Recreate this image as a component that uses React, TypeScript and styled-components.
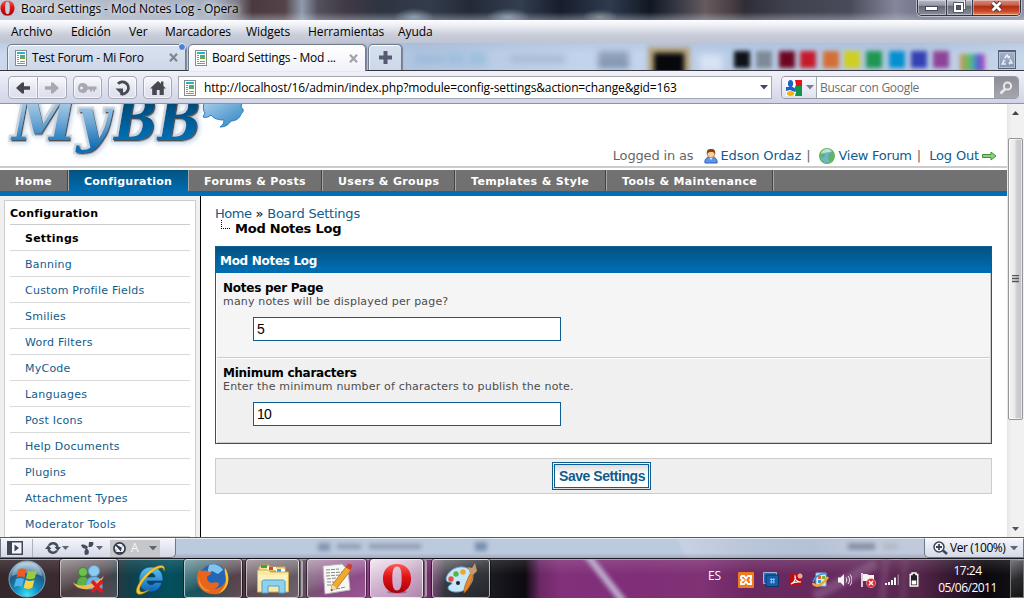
import React from "react";
import styled, { createGlobalStyle, css } from "styled-components";

const ui = `"Open Sans", "Noto Sans", sans-serif`;
const verdana = `"DejaVu Sans", sans-serif`;

const Global = createGlobalStyle`
  * { box-sizing: border-box; }
  body { margin: 0; background: #fff; overflow: hidden; }
  svg { display: block; flex: none; }
`;

const Screen = styled.div`
  width: 1024px;
  height: 598px;
  display: flex;
  flex-direction: column;
  overflow: hidden;
  font: 12px/16px ${ui};
  color: #000;
`;

const Text = styled.span<{ $ls?: number; $ml?: number; $w?: number }>`
  white-space: nowrap;
  flex: none;
  letter-spacing: ${(p) => p.$ls ?? 0}px;
  margin-left: ${(p) => p.$ml ?? 0}px;
  ${(p) => p.$w && css`width: ${p.$w}px;`}
`;

/* ---------- window frame ---------- */

const TitleBar = styled.div`
  height: 20px;
  flex: none;
  display: flex;
  align-items: flex-start;
  background:
    linear-gradient(180deg, rgba(255,255,255,0) 60%, rgba(200,210,225,.4) 100%),
    radial-gradient(ellipse 20px 9px at 414px 17px, #a3b7c9aa, transparent),
    radial-gradient(ellipse 22px 9px at 508px 17px, #a3b7c9aa, transparent),
    radial-gradient(ellipse 18px 8px at 600px 17px, #93a79f99, transparent),
    linear-gradient(90deg, #c6d0dd 0, #b6becb 80px, #aab4c4 160px, #a5afc0 215px, #7b7882 238px, #4a3a3f 252px, #54444a 285px, #8f9cad 302px, #54505c 318px, #403a44 345px, #2e3541 380px, #343c4c 430px, #232a37 470px, #343e50 520px, #161d2c 560px, #303b4f 610px, #111722 650px, #3a3c48 680px, #665a5f 705px, #4a4044 730px, #2f2e37 745px, #41424f 790px, #4a4b5a 850px, #85869a 895px, #70728a 925px, #8c8fa6 1024px);
`;

const TitleText = styled(Text)`
  line-height: 17px;
  margin-left: 6px;
  text-shadow: 0 0 5px #fff, 0 0 8px #ffffffaa;
`;

const WinButtons = styled.div`
  margin-left: auto;
  margin-right: 3px;
  width: 104px;
  height: 16px;
  display: flex;
  border: 1px solid #2f3342;
  border-top: 0;
  border-radius: 0 0 5px 5px;
  overflow: hidden;
  box-shadow: 0 0 0 1px #ffffff77;
`;

const WinButton = styled.div<{ $w: number; $close?: boolean }>`
  width: ${(p) => p.$w}px;
  height: 15px;
  display: flex;
  justify-content: center;
  border-right: 1px solid #3a3d4c;
  box-shadow: inset 0 0 0 1px #ffffff66;
  background: ${(p) =>
    p.$close
      ? "linear-gradient(#d58b7c 0, #c7604c 35%, #b02c13 40%, #c94a26 75%, #e58a5e 100%)"
      : "linear-gradient(#b5b8c4 0, #9799a7 35%, #666877 42%, #8a8d9c 100%)"};
  &:last-child { border-right: 0; }
`;

const MenuBar = styled.div`
  height: 23px;
  flex: none;
  display: flex;
  align-items: center;
  padding-top: 1px;
  background: linear-gradient(#fdfdfe 0, #eceef4 25%, #c9cdda 65%, #bfc4d3 100%);
`;

const TabStrip = styled.div`
  height: 28px;
  flex: none;
  display: flex;
  align-items: flex-end;
  position: relative;
  border-bottom: 1px solid #37383f;
  background:
    linear-gradient(180deg, rgba(150,170,200,.25), transparent 40%),
    linear-gradient(90deg, #c9d8ec 0, #c0cfe4 300px, #b0c4e0 420px, #bdcfe8 520px, #c5d5ee 620px, #bacde8 720px, #b4c8e2 900px, #c7d7ea 1024px);
`;

const Glass = styled.div`
  position: absolute;
  inset: 0;
  overflow: hidden;
`;

const Smudge = styled.i<{ $x: number; $y: number; $w: number; $h: number; $c: string; $b?: number; $edge?: string }>`
  position: absolute;
  left: ${(p) => p.$x}px;
  top: ${(p) => p.$y}px;
  width: ${(p) => p.$w}px;
  height: ${(p) => p.$h}px;
  background: ${(p) => p.$c};
  ${(p) => p.$edge && css`border: 6px solid ${p.$edge};`}
  filter: blur(${(p) => p.$b ?? 2}px);
`;

const Tab = styled.div<{ $active?: boolean; $w: number; $ml: number }>`
  position: relative;
  width: ${(p) => p.$w}px;
  height: ${(p) => (p.$active ? 27 : 26)}px;
  margin-left: ${(p) => p.$ml}px;
  margin-bottom: ${(p) => (p.$active ? -1 : 0)}px;
  flex: none;
  display: flex;
  align-items: center;
  padding: 0 7px 0 ${(p) => (p.$active ? 6 : 7)}px;
  border: 1px solid #747d8e;
  border-bottom: 0;
  border-radius: 5px 5px 0 0;
  box-shadow: inset 0 1px 0 #fff, inset 1px 0 0 #ffffff99, 1px 0 1px #52596a99;
  background: ${(p) =>
    p.$active ? "linear-gradient(#ffffff, #f1f2f9)" : "linear-gradient(#dfe7f2cc, #ccd7e8)"};
`;

const TabDot = styled.i`
  position: absolute;
  right: -1px;
  top: -2px;
  width: 8px;
  height: 8px;
  border: 1px solid #eef3ff;
  border-radius: 50%;
  background: #4b7fd6;
`;

const Spacer = styled.span`
  flex: 1;
`;

const Trash = styled.div`
  position: relative;
  margin: 0 8px 1px auto;
  width: 18px;
  height: 19px;
  display: grid;
  place-items: center;
  border: 1px solid #56627a;
  border-top-width: 2px;
  background: linear-gradient(#a3b1c6, #8494ae);
  box-shadow: inset 0 0 0 1px #b5c2d6;
`;

const ToolBar = styled.div`
  height: 33px;
  flex: none;
  display: flex;
  align-items: flex-start;
  padding: 5px 5px 0 8px;
  border-bottom: 1px solid #8f93a8;
  background: linear-gradient(#f1f1f9 0, #e2e4f1 45%, #d0d4e7 100%);
`;

const ToolButton = styled.div<{ $w: number; $join?: "l" | "r" }>`
  width: ${(p) => p.$w}px;
  height: 23px;
  flex: none;
  display: grid;
  place-items: center;
  margin-right: ${(p) => (p.$join === "l" ? 0 : 6)}px;
  border: 1px solid #a5a8b5;
  ${(p) => p.$join === "r" && "border-left: 0;"}
  border-radius: ${(p) => (p.$join === "l" ? "4px 0 0 4px" : p.$join === "r" ? "0 4px 4px 0" : "4px")};
  background: linear-gradient(#fafafd, #e3e5f0 60%, #dddfeb);
  box-shadow: inset 0 0 0 1px #ffffffaa;
`;

const Address = styled.div`
  width: 594px;
  height: 23px;
  flex: none;
  display: flex;
  align-items: center;
  padding: 0 3px 0 5px;
  background: #fff;
  border: 1px solid #a4a6b2;
`;

const Search = styled.div`
  width: 238px;
  height: 23px;
  flex: none;
  display: flex;
  margin-left: 9px;
  border: 1px solid #9699a6;
  border-radius: 4px;
  overflow: hidden;
`;

const Engine = styled.div`
  width: 35px;
  display: flex;
  align-items: center;
  gap: 4px;
  padding-left: 4px;
  border-right: 1px solid #a4a6b2;
  background: linear-gradient(#fafafd, #dfe1ed);
`;

const SearchField = styled.div`
  flex: 1;
  display: flex;
  align-items: center;
  padding-left: 3px;
  background: #fff;
  color: #6d6d6d;
`;

const SearchGo = styled.div`
  width: 24px;
  display: grid;
  place-items: center;
  background: linear-gradient(#8e8f96, #a5a6ad);
`;

/* ---------- page ---------- */

const Viewport = styled.div`
  height: 433px;
  flex: none;
  display: flex;
  background: #fff;
`;

const Page = styled.div`
  width: 1007px;
  flex: none;
  display: flex;
  flex-direction: column;
  overflow: hidden;
  font: 13px/16px ${verdana};
`;

const Header = styled.div`
  height: 64px;
  flex: none;
  display: flex;
  justify-content: space-between;
  border-bottom: 2px solid #ccc;
`;

const Welcome = styled.div`
  display: flex;
  align-items: center;
  height: 20px;
  margin-top: 42px;
  margin-right: 10px;
  color: #666;
`;

const Link = styled(Text).attrs({ as: "a" })`
  color: #0f5c8e;
`;

const Nav = styled.div`
  height: 26px;
  flex: none;
  margin-top: 2px;
  display: flex;
  background: #717171;
  border-bottom: 5px solid #006eb3;
`;

const NavItem = styled.div<{ $w: number; $active?: boolean }>`
  width: ${(p) => p.$w}px;
  height: 21px;
  flex: none;
  padding-left: 15px;
  font: bold 11px/24px ${verdana};
  letter-spacing: ${(p) => (p.$active ? 0.24 : 0.35)}px;
  white-space: nowrap;
  color: #fff;
  border-right: 1px solid #a5a5a5;
  ${(p) =>
    p.$active
      ? "background: linear-gradient(#04527f, #006cb0);"
      : "box-shadow: inset -1px 0 0 #444;"}
`;

const Columns = styled.div`
  flex: 1;
  min-height: 0;
  display: flex;
`;

const SideColumn = styled.div`
  width: 201px;
  flex: none;
  padding: 4px 4px 0;
  background: #f0f0f0;
  border-right: 1px solid #000;
`;

const SideBox = styled.div`
  height: 360px;
  padding: 0 5px;
  background: #fff;
  border: 1px solid #ccc;
`;

const SideTitle = styled.div`
  height: 24px;
  font: bold 11px/26px ${verdana};
  letter-spacing: 0.25px;
  border-bottom: 1px solid #ccc;
`;

const SideItem = styled.div<{ $active?: boolean }>`
  height: 26px;
  padding-left: 15px;
  font: ${(p) => (p.$active ? "bold" : "normal")} 11px/27px ${verdana};
  letter-spacing: 0.24px;
  color: ${(p) => (p.$active ? "#000" : "#0f5c8e")};
  border-bottom: 1px solid #d9d9d9;
`;

const Content = styled.div`
  flex: 1;
  padding: 10px 15px 0 14px;
`;

const Crumbs = styled.div`
  height: 16px;
  display: flex;
`;

const Current = styled.div`
  height: 15px;
  display: flex;
  padding-left: 6px;
  font: bold 13px/14px ${verdana};
  letter-spacing: -0.24px;
`;

const Elbow = styled.i`
  width: 9px;
  height: 9px;
  margin: -2px 5px 0 0;
  border-left: 1px dotted #000;
  border-bottom: 1px dotted #000;
`;

const Panel = styled.div`
  height: 198px;
  margin-top: 9px;
  border: 1px solid #0f5c8e;
`;

const PanelTitle = styled.div`
  height: 26px;
  padding-left: 4px;
  font: bold 12px/28px ${verdana};
  letter-spacing: -0.3px;
  color: #fff;
  background: linear-gradient(#04527f, #006cb0 85%);
`;

const Setting = styled.div<{ $alt?: boolean }>`
  height: 85px;
  padding: 7px 0 0 6px;
  margin-left: 1px;
  background: ${(p) => (p.$alt ? "#f0f0f0" : "#f5f5f5")};
  border-bottom: 1px solid #ccc;
  border-right: 1px solid #ccc;
  box-shadow: inset 0 1px 0 #fff;
`;

const SettingName = styled.div`
  height: 15px;
  font: bold 12px/17px ${verdana};
  letter-spacing: -0.25px;
`;

const SettingHelp = styled.div`
  font: 11px/13px ${verdana};
  letter-spacing: 0.175px;
  color: #4c4c4c;
`;

const Field = styled.div`
  width: 308px;
  height: 24px;
  margin: 9px 0 0 30px;
  padding-left: 3px;
  font: 14px/23px "Liberation Sans", Arial, sans-serif;
  letter-spacing: -0.8px;
  background: #fff;
  border: 1px solid #0f5c8e;
`;

const Submit = styled.div`
  height: 36px;
  margin-top: 14px;
  padding-right: 4px;
  display: grid;
  place-items: center;
  background: #efefef;
  border: 1px solid #ccc;
`;

const SaveButton = styled.div`
  width: 99px;
  height: 28px;
  padding-left: 4px;
  font: bold 14px/23px "Liberation Sans", Arial, sans-serif;
  letter-spacing: -0.45px;
  white-space: nowrap;
  color: #0f5c8e;
  border: 3px double #0f5c8e;
  background: linear-gradient(#dcdcdc, #fff 45%);
`;

const ScrollBar = styled.div`
  width: 17px;
  display: flex;
  flex-direction: column;
  align-items: center;
  justify-content: space-between;
  padding: 7px 0 6px;
  background: linear-gradient(90deg, #e6e6e6, #f1f1f1 30%);
`;

const Thumb = styled.div`
  width: 15px;
  height: 282px;
  margin: 23px 0 auto;
  display: grid;
  place-items: center;
  border: 1px solid #979797;
  border-radius: 2px;
  background: linear-gradient(90deg, #f4f4f4 0, #e9e9eb 45%, #d2d2d6 55%, #c0c1c6 100%);
  box-shadow: inset 0 0 0 1px #fff9;
`;

/* ---------- bottom bars ---------- */

const StatusBar = styled.div`
  position: relative;
  height: 21px;
  flex: none;
  display: flex;
  justify-content: space-between;
  border-top: 1px solid #555a66;
  box-shadow: inset 0 1px 0 #e6ecf5;
  background:
    linear-gradient(180deg, transparent 75%, #8d8ea888 100%),
    linear-gradient(65deg, #bccadd 0, #bccadd 620px, #c6d1e2 624px, #b9c5d8 690px, #b5c1d5 740px, #c1cbdc 790px, #bdc7da 100%);
`;

const StatusGroup = styled.div<{ $w: number; $right?: boolean }>`
  position: relative;
  width: ${(p) => p.$w}px;
  height: 20px;
  display: flex;
  align-items: center;
  border: 1px solid #6f7686;
  border-top-color: #fff;
  border-radius: ${(p) => (p.$right ? "0 0 0 5px" : "0 0 5px 0")};
  background: linear-gradient(#f3f5fa, #d3d9e6);
`;

const StatusSep = styled.i`
  width: 1px;
  height: 18px;
  margin-left: 9px;
  background: #aab1c0;
`;

const Turbo = styled.div`
  height: 17px;
  width: 50px;
  margin-left: 7px;
  display: flex;
  align-items: center;
  padding-left: 3px;
  background: #c6c7ca;
  color: #f5f5f5;
`;

const TaskBar = styled.div`
  height: 40px;
  flex: none;
  display: flex;
  position: relative;
  border-top: 1px solid #1c1a22;
  box-shadow: inset 0 1px 0 #a79fae;
  background:
    linear-gradient(180deg, rgba(255,255,255,.12) 0, transparent 40%),
    linear-gradient(90deg, #35282d 0, #3b2b31 60px, #3d3238 105px, #10404b 130px, #03505d 170px, #07434e 200px, #47323c 235px, #5a4d58 300px, #7c3b77 325px, #92408a 400px, #6d2f65 430px, #1b1d25 445px, #1a1b21 490px, #0d0a10 525px, #6b2865 540px, #82307a 560px, #7f2e77 640px, #803275 700px, #6b2862 750px, #652a5d 850px, #532549 920px, #2a1428 960px, #0b080c 985px, #131216 1024px);
`;

const Beam = styled.i<{ $x: number; $w: number; $r: number; $c: string }>`
  position: absolute;
  left: ${(p) => p.$x}px;
  top: -14px;
  width: ${(p) => p.$w}px;
  height: 70px;
  background: ${(p) => p.$c};
  transform: rotate(${(p) => p.$r}deg);
  filter: blur(2px);
`;

const TaskButton = styled.div<{ $w: number; $ml?: number; $tone?: string; $plain?: boolean; $stack?: boolean }>`
  position: relative;
  width: ${(p) => p.$w}px;
  height: 39px;
  margin-left: ${(p) => p.$ml ?? 0}px;
  flex: none;
  display: grid;
  place-items: center;
  ${(p) =>
    !p.$plain &&
    css`
      border: 1px solid #ffffff99;
      border-radius: 3px;
      outline: 1px solid #00000077;
      outline-offset: -0.5px;
      background: ${p.$tone ?? "linear-gradient(160deg, #ffffff77, #ffffff33 45%, #ffffff14 60%, #ffffff22)"};
    `}
  ${(p) => p.$stack && "box-shadow: 3px 0 0 -1px #00000066, 5px 0 0 -1px #ffffff77;"}
`;

const Tray = styled.div`
  position: relative;
  margin-left: auto;
  display: flex;
  align-items: center;
  color: #fff;
`;

const Language = styled(Text)`
  margin-bottom: 5px;
`;

const TrayIcons = styled.div`
  width: 181px;
  margin-left: 17px;
  padding-top: 2px;
  display: flex;
  align-items: center;
  justify-content: space-between;
`;

const Clock = styled.div`
  width: 83px;
  line-height: 17px;
  display: flex;
  flex-direction: column;
  align-items: center;
  margin: 0 0 0 7px;
`;

const ShowDesktop = styled.div`
  width: 14px;
  height: 38px;
  margin-left: 1px;
  border: 1px solid #77777c;
  background: linear-gradient(150deg, #77777b, #2b2b2f 50%, #141416);
`;

/* ---------- icons ---------- */

const OperaIcon = ({ s, h = s }: { s: number; h?: number }) => (
  <svg width={s} height={h} viewBox="0 0 32 32" preserveAspectRatio="none">
    <defs>
      <linearGradient id="op" x1="0" y1="0" x2="0" y2="1">
        <stop offset="0" stopColor="#ff5a50" />
        <stop offset=".45" stopColor="#e01216" />
        <stop offset="1" stopColor="#a80008" />
      </linearGradient>
    </defs>
    <ellipse cx="16" cy="30" rx="11" ry="1.6" fill="#0004" />
    <path fillRule="evenodd" fill="url(#op)" d="M16 1C7 1 1 7 1 16s6 15 15 15 15-6 15-15S25 1 16 1zm0 2.600c4 0 5 5 5 12.400s-1 12.400-5 12.400-5-5-5-12.400 1-12.400 5-12.400z" />
  </svg>
);

const SheetIcon = () => (
  <svg width="12" height="16" viewBox="0 0 12 16">
    <rect x=".5" y=".5" width="11" height="15" fill="#fff" stroke="#858b8b" />
    <path fill="#21b8c0" d="M2 2h8v2H2z" />
    <path fill="#8a9292" d="M2 5h2v1H2zm0 2h2v1H2zm0 2h2v1H2zm0 2h2v1H2zM5 11h5v1H5zM2 13h8v1H2z" />
    <path fill="#48a9a0" d="M5 5h5v2H5z" />
    <path fill="#7aa82e" d="M5 7h5v2H5z" />
  </svg>
);

const CloseX = ({ c }: { c: string }) => (
  <svg width="9" height="9" viewBox="0 0 9 9">
    <path d="M1 .8l7 7.400M8 .8l-7 7.400" stroke={c} strokeWidth="2.200" />
  </svg>
);

const Caret = ({ c = "#5d6579", w = 8 }: { c?: string; w?: number }) => (
  <svg width={w} height={w / 2 + 0.5} viewBox="0 0 8 4.500">
    <path d="M0 0h8L4 4.500z" fill={c} />
  </svg>
);

const ArrowIcon = ({ c, flip }: { c: string; flip?: boolean }) => (
  <svg width="14" height="12" viewBox="0 0 14 12">
    <path transform={flip ? "matrix(-1 0 0 1 14 0)" : undefined} fill={c} d="M0 6l6-5.500h2V4.300h6v3.400H8v3.800H6z" />
  </svg>
);

const KeyIcon = () => (
  <svg width="19" height="10" viewBox="0 0 19 10">
    <path fillRule="evenodd" fill="#a6a8b2" d="M5 0a5 5 0 1 0 4.600 6.600H12v1.900h2V6.600h1v1.900h2V6.600h1.500V3.600H9.700A5 5 0 0 0 5 0zM3.500 3.400a1.600 1.600 0 1 1 0 3.200 1.600 1.600 0 0 1 0-3.200z" />
  </svg>
);

const ReloadIcon = () => (
  <svg width="16" height="16" viewBox="0 0 16 16">
    <path d="M3 3.800A6 6 0 1 1 5.500 13.600" fill="none" stroke="#474a52" strokeWidth="2.800" />
    <path d="M.5 8.500H8V16z" fill="#474a52" />
  </svg>
);

const HomeIcon = () => (
  <svg width="16" height="14" viewBox="0 0 16 14">
    <path fill="#45484f" d="M8 0l3 2.800V.6h2.400v4.400L16 7.400h-2.200V14H9.600V9H6.800v5H2.200V7.400H0z" />
  </svg>
);

const GoogleIcon = () => (
  <svg width="16" height="16" viewBox="0 0 16 16">
    <path fill="#e8121a" d="M8 0h8v6H8z" />
    <path fill="#12944a" d="M8 6h8v10H6z" />
    <path fill="#fff" d="M0 0h9l1 5-2 4 2 3-1 4H0z" />
    <ellipse cx="4.500" cy="3.600" rx="2.600" ry="3.600" fill="#1d63c6" />
    <path fill="#1d63c6" d="M0 7h7l3 3-1 2-5-2-4 1z" />
    <ellipse cx="4.500" cy="13.400" rx="3.800" ry="2.500" fill="#f3b413" />
  </svg>
);

const MagnifierIcon = () => (
  <svg width="14" height="14" viewBox="0 0 14 14">
    <circle cx="8.500" cy="5" r="3.600" fill="none" stroke="#e9e9ec" strokeWidth="2" />
    <path d="M6 8l-4.500 4.500" stroke="#e9e9ec" strokeWidth="2.600" />
  </svg>
);

const RecycleIcon = () => (
  <svg width="12" height="12" viewBox="0 0 12 12" fill="none" stroke="#e8edf5" strokeWidth="1.600">
    <path d="M3.800 4.200L6 1l2 3M9 5.500l2 3.500H7.600M5 10H1.200l1.900-3.500" />
    <path d="M6.500 4h2V2M8.500 7.800v2.800M1.800 6.200L3.500 6l.7 1.700" strokeWidth="1" />
  </svg>
);

const Logo = () => (
  <svg width="260" height="62" viewBox="0 104 260 62">
    <defs>
      <linearGradient id="my" gradientUnits="userSpaceOnUse" x1="0" y1="98" x2="0" y2="148">
        <stop offset="0" stopColor="#b5d3ea" />
        <stop offset=".5" stopColor="#6ba5d3" />
        <stop offset="1" stopColor="#0d6fb5" />
      </linearGradient>
      <linearGradient id="bb" gradientUnits="userSpaceOnUse" x1="0" y1="98" x2="0" y2="142">
        <stop offset="0" stopColor="#03466f" />
        <stop offset="1" stopColor="#0672b8" />
      </linearGradient>
      <linearGradient id="bub" x1="0" y1="0" x2="1" y2="1">
        <stop offset="0" stopColor="#a7cdea" />
        <stop offset="1" stopColor="#2a82c2" />
      </linearGradient>
      <filter id="sh" x="-10%" y="-10%" width="120%" height="130%">
        <feMorphology in="SourceAlpha" operator="dilate" radius="2" result="fat" />
        <feGaussianBlur in="fat" stdDeviation=".4" result="fatSoft" />
        <feFlood floodColor="#d0d6dc" />
        <feComposite in2="fatSoft" operator="in" result="rim" />
        <feGaussianBlur in="fat" stdDeviation="2" result="haloShape" />
        <feFlood floodColor="#6d9cd0" floodOpacity=".35" />
        <feComposite in2="haloShape" operator="in" />
        <feOffset dx="1" dy="2" result="halo" />
        <feDropShadow in="SourceGraphic" dx="1" dy="1.500" stdDeviation=".5" floodColor="#222" floodOpacity=".9" result="face" />
        <feMerge>
          <feMergeNode in="halo" />
          <feMergeNode in="rim" />
          <feMergeNode in="face" />
        </feMerge>
      </filter>
    </defs>
    <g filter="url(#sh)" fontFamily="'DejaVu Serif', serif" fontWeight="bold" fontStyle="italic" fontSize="60">
      <text fill="url(#my)" x="12" y="140" textLength="98" lengthAdjust="spacingAndGlyphs">My</text>
      <text fill="url(#bb)" x="114" y="140" textLength="87" lengthAdjust="spacingAndGlyphs">BB</text>
    </g>
    <path
      fill="url(#bub)"
      stroke="#2b80be"
      strokeWidth="1"
      d="M204 103c-1 4-1 8 1 10l-2 4c3 1 6 0 8-2 3 4 8 5 13 5 0 3-1 5-4 7 6 0 9-3 11-6 5 0 9-3 10-7 3-2 3-5 0-7l1-4z"
    />
  </svg>
);

const UserIcon = () => (
  <svg width="14" height="15" viewBox="0 0 14 15">
    <path d="M1 14c-.8-4 2-6 6-6s6.800 2 6 6z" fill="#5e93e8" stroke="#2d5fc0" />
    <path d="M5 8l2 3 2-3z" fill="#fff" />
    <circle cx="7" cy="5" r="3.800" fill="#f6cf9f" stroke="#a0622c" strokeWidth=".7" />
    <path d="M2.800 5C2.500 0 5 0 7 0s4.700.2 4.200 5C10 3.500 9 3 8 3 6 3 4 3.200 2.800 5z" fill="#8a4514" />
  </svg>
);

const GlobeIcon = () => (
  <svg width="16" height="16" viewBox="0 0 16 16">
    <circle cx="8" cy="8" r="7.300" fill="#6cb4cf" stroke="#68b159" strokeWidth="1.400" />
    <path d="M2 4c2-2 5-3 7-2.500L7 4 5 5l1 3-3 2C1 8 1 6 2 4zM10 6l3-2c2 2 2 5 1 7l-3 3-2-3 1-2-1-1z" fill="#5db567" />
    <path d="M2 6a6 6 0 0 1 11-2.500C9 4 5 5 2 6z" fill="#fff" opacity=".6" />
  </svg>
);

const GreenArrow = () => (
  <svg width="15" height="10" viewBox="0 0 15 10">
    <path d="M.5 3.500h8.500V1l5 4-5 4V6.500H.5z" fill="#8fd07c" stroke="#3c9138" />
  </svg>
);

const PanelIcon = () => (
  <svg width="16" height="14" viewBox="0 0 16 14">
    <rect x=".75" y=".75" width="14.500" height="12.500" fill="#f3f5fa" stroke="#3f4658" strokeWidth="1.500" />
    <path d="M1 1h4v12H1z" fill="#3f4658" />
    <path d="M7.500 3.500v7L12 7z" fill="#3f4658" />
  </svg>
);

const SyncIcon = () => (
  <svg width="16" height="12" viewBox="0 0 16 12">
    <path d="M4 3.500A4.600 4.600 0 0 1 12.500 5M12 8.500A4.600 4.600 0 0 1 3.500 7" fill="none" stroke="#454c5c" strokeWidth="2.400" />
    <path d="M9.500 5H16l-3.200 4zM6.500 7H0l3.200-4z" fill="#454c5c" />
  </svg>
);

const UniteIcon = () => (
  <svg width="14" height="13" viewBox="0 0 14 13" fill="#454c5c">
    <path d="M0 3c3-1 5 0 7 2L6 7C3 7 1 6 0 3zM8 0h4c1 1 .5 4-2 5L7.500 5zM5.500 6.500c2.500 1 3 4 1.500 6L4 13c-1-3-.5-5 1-6.500z" />
  </svg>
);

const GaugeIcon = () => (
  <svg width="13" height="13" viewBox="0 0 13 13">
    <circle cx="6.500" cy="6.500" r="5.600" fill="#f1f3f7" stroke="#333a49" strokeWidth="1.700" />
    <path d="M3 3l4.500 5L8 6z" stroke="#333a49" strokeWidth="1.400" fill="#333a49" />
    <path d="M2.500 8h1M9.500 4l.8-.6M4 10.500h5" stroke="#333a49" />
  </svg>
);

const ZoomIcon = () => (
  <svg width="15" height="14" viewBox="0 0 15 14">
    <circle cx="6" cy="6" r="5" fill="#f3f5fa" stroke="#3d4456" strokeWidth="1.500" />
    <path d="M6 3v6M3 6h6" stroke="#3d4456" strokeWidth="1.800" />
    <path d="M10 9.500l4 3.500" stroke="#3d4456" strokeWidth="2.400" />
  </svg>
);

const StartOrb = () => (
  <svg width="38" height="38" viewBox="0 0 38 38">
    <defs>
      <radialGradient id="orb" cx=".5" cy=".95" r=".9">
        <stop offset="0" stopColor="#3fe4fb" />
        <stop offset=".35" stopColor="#1493c4" />
        <stop offset=".7" stopColor="#1e5b86" />
        <stop offset="1" stopColor="#a9c6d6" />
      </radialGradient>
    </defs>
    <circle cx="19" cy="19" r="18" fill="url(#orb)" stroke="#78a9bd" />
    <path d="M4 16C5 7 12 3 19 3s14 4 15 13c-9-4-21-4-30 0z" fill="#fff" opacity=".3" />
    <path d="M10.500 9.500c3-1.500 5-1 8 0l-2 8c-3-1.200-5-1.200-8 0z" fill="#ee5a24" />
    <path d="M20 10.500c3 1.200 6 1.200 9-.3l-2.200 8c-3 1.300-6 1.200-8.800 0z" fill="#9bcb3c" />
    <path d="M8 19c3-1.300 5.300-1.200 8 0l-2 8c-3-1.300-5-1.200-8 0z" fill="#4fb2ec" />
    <path d="M17.600 20c3 1.300 5.600 1.300 8.800 0l-2 7.800c-3 1.500-6 1.400-8.800 0z" fill="#fcd33c" />
  </svg>
);

const MessengerIcon = () => (
  <svg width="34" height="30" viewBox="0 0 34 30">
    <circle cx="11" cy="8" r="4.500" fill="#6dc04e" stroke="#3f8a2c" />
    <path d="M5 23c-1-7 2-10.500 6-10.500s7 3 6 10.500z" fill="#5cb340" stroke="#37832a" />
    <circle cx="22" cy="7" r="5.500" fill="#8ccaf0" stroke="#5c9fd0" />
    <path d="M14 25c-1-9 3-12.500 8-12.500s9 3.500 8 12.500z" fill="#6db5e6" stroke="#4a8fc4" />
    <path d="M1 18c5 6 20 4 31-6-4 9-13 14-21 13C5 24 2 21 1 18z" fill="#eebb54" />
    <path d="M20 17l10 11M30 17L20 28" stroke="#e01b22" strokeWidth="3.500" />
  </svg>
);

const IeIcon = () => (
  <svg width="34" height="34" viewBox="0 0 34 34">
    <defs>
      <linearGradient id="ie" x1="0" y1="0" x2="0" y2="1">
        <stop offset="0" stopColor="#5cc4f4" />
        <stop offset="1" stopColor="#0b63b8" />
      </linearGradient>
    </defs>
    <path fillRule="evenodd" fill="url(#ie)" stroke="#0a3c78" strokeWidth=".6" d="M17 5c8 0 12 5 12 14H13c0 4 6 5 8 1.500h7C26 27 22 30 17 30 9 30 5 25 5 18S9 5 17 5zm-4 10h8c0-5-7-5-8 0z" />
    <path d="M30 9c3-9-9-6-17 2S-.5 30 4 32c3 1 7-1 11-4-5 2-8 3-9 1-2-4 5-13 11-18S30 3 30 9z" fill="#f4c431" stroke="#b98a10" strokeWidth=".5" />
  </svg>
);

const FirefoxIcon = () => (
  <svg width="34" height="32" viewBox="0 0 34 32">
    <circle cx="17.500" cy="14" r="13" fill="#2465b5" />
    <path d="M13 2c6-2 12 1 14 5l-5 4-6-3-5 3z" fill="#7ec4ee" />
    <path d="M29 5c6 9 4 22-7 26C10 33 0 25 1 14c.3-4 2-7 3-9 0 2 .5 3 1 3.500C7 7 10 7 12 8.500c2 .5 3 0 3 2-1 2-4 2-4 4 0 4 3 6 7 5 2-.5 4-.2 5 1 0 3-3 5-6 5 7 1 13-4 13-11 0-4-2-6-1-9.500z" fill="#e8651c" />
    <path d="M29 5c6 9 4 22-7 26 5-4 8-9 8-14 0-5-2-8-1-12z" fill="#fbc52e" />
    <path d="M3 14c0 6 4 12 11 14-3 1-13-3-11-14z" fill="#f79a34" />
  </svg>
);

const FolderIcon = () => (
  <svg width="34" height="31" viewBox="0 0 34 31">
    <path d="M3 4l3-2h7l1 2h15v4H3z" fill="#f6e08b" stroke="#c9a648" />
    <path d="M5 2h6v3H5z" fill="#2da84c" />
    <path d="M11 4h9v3h-9z" fill="#fff" /><path d="M13 4h4v3h-4z" fill="#d6453c" />
    <path d="M20 6h9v3h-9z" fill="#fff" /><path d="M21 6h4v3h-4z" fill="#3a97dc" />
    <path d="M1.500 7h11l2 2h18v20h-31z" fill="#f9e9a5" stroke="#d0ac50" />
    <path d="M2 12h30v5H2z" fill="#fff6cf" opacity=".6" />
    <path d="M6 30V19c0-1 1-2 2-2h19c1 0 2 1 2 2v11h-6v-7H12v7z" fill="#8fd2ee" stroke="#4a9fcc" />
  </svg>
);

const NotepadIcon = () => (
  <svg width="32" height="32" viewBox="0 0 32 32">
    <path d="M2 3l19-2 6 6 2 20-25 4z" fill="#f7f7f5" stroke="#b5b5b5" />
    <path d="M5 7l13-1M5 10l17-1M5 13l14-1M6 16l9-1M6 19l7 0M6 22l6 0M15 26l10-2" stroke="#8a8a8a" strokeWidth="1" strokeDasharray="4 1" />
    <path d="M11 22l14-18 5 3-14 18-6 3z" fill="#f0ab2c" stroke="#9a6418" strokeWidth=".7" />
    <path d="M25 4l2-3c2-1 5 1 4 3l-2 3z" fill="#cf3d34" />
    <path d="M11 22l5 3-6 3z" fill="#f6deb2" /><path d="M10.500 26l1.500 1-2 1z" fill="#222" />
  </svg>
);

const PaintIcon = () => (
  <svg width="34" height="33" viewBox="0 0 34 33">
    <path d="M8 8c8-6 20-3 21 6 .5 8-8 17-18 16C3 29 3 25 6 23c3-1 2-3-1-3-5 0-3-8 3-12z" fill="#c7e6f7" stroke="#6aa9cf" />
    <circle cx="7" cy="17" r="2.700" fill="#e2533f" /><circle cx="12" cy="12" r="2.700" fill="#58b34c" />
    <circle cx="19" cy="10" r="2.800" fill="#f0a631" /><circle cx="14" cy="21" r="2" fill="#223" />
    <path d="M20 31c-1-5 4-15 6-19l3 1c-1 6-4 15-9 18z" fill="#e7862c" stroke="#a3561a" strokeWidth=".6" />
    <path d="M26 12l-2-7 4 1 3-5 2 8-4 4z" fill="#c49b6a" />
  </svg>
);

const XamppIcon = () => (
  <svg width="16" height="16" viewBox="0 0 16 16">
    <rect width="16" height="16" rx="1" fill="#f07c1e" />
    <path d="M3 4h3l2 2.500L10 4h3v3l-1 1 1 1v3h-3L8 9.500 6 12H3V9M3 4v2.500L5.500 8 3 9.500" fill="none" stroke="#fff" strokeWidth="1.800" />
  </svg>
);

const DisplayIcon = () => (
  <svg width="16" height="15" viewBox="0 0 16 15">
    <path d="M.5.500h13v11h-13z" fill="#2d6fb8" stroke="#8fbbe0" />
    <path d="M3 3h12.500v11.500H3z" fill="#175da8" stroke="#07366b" />
    <path d="M7 7.500h5M7 10h5M8.300 6v5.500M10.700 6v5.500" stroke="#9fd0f2" strokeWidth=".8" />
  </svg>
);

const AdobeIcon = () => (
  <svg width="15" height="14" viewBox="0 0 15 14">
    <path d="M1 1h12v12H1z" fill="#b90f14" />
    <path d="M3 11c4-2 5-6 4-8-1 3 2 6 6 6-4-.5-8 .5-10 2z" fill="none" stroke="#fff" strokeWidth="1.100" />
    <circle cx="12" cy="3" r="2.500" fill="#e9a89a" />
  </svg>
);

const UpdateIcon = () => (
  <svg width="17" height="16" viewBox="0 0 17 16">
    <path d="M4 1h10v13H4z" fill="#d6ecf8" stroke="#7db1d2" />
    <path d="M6 4h3v3H6z" fill="#e9622c" /><path d="M10 4h3v3h-3z" fill="#71b83a" /><path d="M6 8h3v3H6z" fill="#3b93de" />
    <path d="M1 11c1 4 8 4 15-6" fill="none" stroke="#f3a92c" strokeWidth="2.400" />
    <path d="M1 10c1-5 7-9 14-8" fill="none" stroke="#3b93de" strokeWidth="1.500" />
  </svg>
);

const SpeakerIcon = () => (
  <svg width="14" height="14" viewBox="0 0 14 14">
    <path d="M0 4.500h2.500L6 1v12L2.500 9.500H0z" fill="#f4f4f4" />
    <path d="M8 4.500c1 1.500 1 3.500 0 5M10 3c2 2.500 2 5.500 0 8M12 1.500c2.600 3.500 2.600 7.500 0 11" fill="none" stroke="#e9e9e9" />
  </svg>
);

const FlagIcon = () => (
  <svg width="15" height="16" viewBox="0 0 15 16">
    <path d="M1 1v14" stroke="#fff" strokeWidth="1.500" />
    <path d="M2 2h4l2 1h5v7H8L6 9H2z" fill="#f4f4f4" />
    <circle cx="10" cy="11" r="4.600" fill="#dc2c2c" stroke="#f3b0b0" strokeWidth=".6" />
    <path d="M8 9l4 4M12 9l-4 4" stroke="#fff" strokeWidth="1.500" />
  </svg>
);

const SignalIcon = () => (
  <svg width="15" height="12" viewBox="0 0 15 12" fill="#f4f4f4">
    <path d="M0 9h2v2H0zM3 8h2v3H3zM6 6h2v5H6zM9 3.500h2V11H9z" />
    <path d="M12.500.5h1.500v10.500h-1.500z" fill="#8f7d93" />
  </svg>
);

const BatteryIcon = () => (
  <svg width="10" height="15" viewBox="0 0 10 15">
    <path d="M3 1h4v1.500h1.800v11.500H1.200V2.500H3z" fill="#222" stroke="#fff" strokeWidth="1.400" />
    <path d="M2.700 8.500h4.600v4H2.700z" fill="#fff" />
  </svg>
);

/* ---------- data ---------- */

const menus: [string, number, number][] = [
  ["Archivo", 11, 60], ["Edición", 0, 58], ["Ver", 0, 36], ["Marcadores", 0, 81],
  ["Widgets", 0, 62], ["Herramientas", 0, 90], ["Ayuda", 0, 40],
];

const swatches: [number, string][] = [
  [734, "#0d1218"], [756, "#7e8a98"], [779, "#6d0520"], [800, "#c41a2c"], [823, "#d46e34"],
  [844, "#cfcf22"], [866, "#1f9652"], [889, "#058fd0"], [911, "#3540b4"], [933, "#8d4398"],
];

const navItems: [string, number][] = [
  ["Home", 69], ["Configuration", 120], ["Forums & Posts", 134],
  ["Users & Groups", 133], ["Templates & Style", 151], ["Tools & Maintenance", 167],
];

const sideItems = [
  "Settings", "Banning", "Custom Profile Fields", "Smilies", "Word Filters", "MyCode",
  "Languages", "Post Icons", "Help Documents", "Plugins", "Attachment Types", "Moderator Tools",
];

export default function App() {
  return (
    <Screen>
      <Global />
      <TitleBar>
        <OperaIcon s={15} h={16} />
        <TitleText $ls={-0.1}>Board Settings - Mod Notes Log - Opera</TitleText>
        <WinButtons>
          <WinButton $w={29}>
            <svg width="13" height="12" viewBox="0 0 13 12"><rect x=".5" y="6.500" width="12" height="4" fill="#fff" stroke="#444857" /></svg>
          </WinButton>
          <WinButton $w={27}>
            <svg width="13" height="13" viewBox="0 0 13 13">
              <path d="M4 1h7.500v7.500H9" fill="none" stroke="#444857" strokeWidth="3" />
              <path d="M4 1h7.500v7.500H9" fill="none" stroke="#fff" strokeWidth="1.400" />
              <rect x="2" y="4" width="7" height="7" fill="#555968" stroke="#444857" strokeWidth="3.500" />
              <rect x="2" y="4" width="7" height="7" fill="none" stroke="#fff" strokeWidth="2" />
            </svg>
          </WinButton>
          <WinButton $w={47} $close>
            <svg width="13" height="13" viewBox="0 0 13 13">
              <path d="M2.500 2.500l8 8M10.500 2.500l-8 8" stroke="#49323a" strokeWidth="4.600" />
              <path d="M2.500 2.500l8 8M10.500 2.500l-8 8" stroke="#fff" strokeWidth="2.800" />
            </svg>
          </WinButton>
        </WinButtons>
      </TitleBar>

      <MenuBar>
        {menus.map(([label, ml, w]) => (
          <Text key={label} $ml={ml} $w={w} $ls={-0.07}>{label}</Text>
        ))}
      </MenuBar>

      <TabStrip>
        <Glass>
          <Smudge $x={415} $y={12} $w={30} $h={8} $c="#9dbbd9" $b={3} />
          <Smudge $x={447} $y={9} $w={18} $h={14} $c="#9fc0dd" $b={3} />
          <Smudge $x={468} $y={9} $w={18} $h={14} $c="#9fc0dd" $b={3} />
          <Smudge $x={510} $y={12} $w={55} $h={8} $c="#a9bcd4" $b={3} />
          <Smudge $x={598} $y={8} $w={31} $h={17} $c="linear-gradient(#8fa0b8 55%, #6f86a5)" $b={3} />
          <Smudge $x={648} $y={4} $w={42} $h={34} $c="#06080b" $edge="#b3a078" $b={2.5} />
          <Smudge $x={700} $y={12} $w={22} $h={16} $c="#d8e4f3" $b={3} />
          {swatches.map(([x, c]) => (
            <Smudge key={x} $x={x} $y={8} $w={16} $h={17} $c={c} $b={2.3} />
          ))}
          <Smudge $x={960} $y={11} $w={25} $h={18} $c="linear-gradient(90deg, #d08a6a, #7fbb48, #48b0a8, #5a5ad8, #d04fb0)" />
        </Glass>
        <Tab $w={179} $ml={7}>
          <SheetIcon />
          <Text $ml={5} $ls={-0.2}>Test Forum - Mi Foro</Text>
          <Spacer />
          <CloseX c="#81858f" />
          <TabDot />
        </Tab>
        <Tab $active $w={178} $ml={2}>
          <SheetIcon />
          <Text $ml={5} $ls={-0.24}>Board Settings - Mod ...</Text>
          <Spacer />
          <CloseX c="#a1a3a9" />
        </Tab>
        <Tab $w={34} $ml={2}>
          <Spacer />
          <svg width="13" height="13" viewBox="0 0 13 13"><path d="M4.500 0h4v4.500H13v4H8.500V13h-4V8.500H0v-4h4.500z" fill="#565b73" /></svg>
          <Spacer />
        </Tab>
        <Trash><RecycleIcon /></Trash>
      </TabStrip>

      <ToolBar>
        <ToolButton $w={30} $join="l"><ArrowIcon c="#43464e" /></ToolButton>
        <ToolButton $w={29} $join="r"><ArrowIcon c="#a6a8b2" flip /></ToolButton>
        <ToolButton $w={29}><KeyIcon /></ToolButton>
        <ToolButton $w={29}><ReloadIcon /></ToolButton>
        <ToolButton $w={29}><HomeIcon /></ToolButton>
        <Address>
          <SheetIcon />
          <Text $ml={8} $ls={-0.135}>http://localhost/16/admin/index.php?module=config-settings&amp;action=change&amp;gid=163</Text>
          <Spacer />
          <Caret c="#3f4a5e" />
        </Address>
        <Search>
          <Engine><GoogleIcon /><Caret c="#7a7f91" /></Engine>
          <SearchField><Text $ls={-0.3}>Buscar con Google</Text></SearchField>
          <SearchGo><MagnifierIcon /></SearchGo>
        </Search>
      </ToolBar>

      <Viewport>
        <Page>
          <Header>
            <Logo />
            <Welcome>
              <Text $ls={-0.15}>Logged in as</Text>
              <Text $ml={10}><UserIcon /></Text>
              <Link $ml={3} $ls={-0.12}>Edson Ordaz</Link>
              <Text $ml={5}>|</Text>
              <Text $ml={8}><GlobeIcon /></Text>
              <Link $ml={4} $ls={-0.3}>View Forum</Link>
              <Text $ml={5}>|</Text>
              <Link $ml={8} $ls={-0.15}>Log Out</Link>
              <Text $ml={3}><GreenArrow /></Text>
            </Welcome>
          </Header>
          <Nav>
            {navItems.map(([label, w], i) => (
              <NavItem key={label} $w={w} $active={i === 1}>{label}</NavItem>
            ))}
          </Nav>
          <Columns>
            <SideColumn>
              <SideBox>
                <SideTitle>Configuration</SideTitle>
                {sideItems.map((label, i) => (
                  <SideItem key={label} $active={i === 0}>{label}</SideItem>
                ))}
              </SideBox>
            </SideColumn>
            <Content>
              <Crumbs>
                <Link $ls={-0.5}>Home</Link>
                <Text $ml={4}>»</Text>
                <Link $ml={4} $ls={-0.22}>Board Settings</Link>
              </Crumbs>
              <Current><Elbow />Mod Notes Log</Current>
              <Panel>
                <PanelTitle>Mod Notes Log</PanelTitle>
                <Setting>
                  <SettingName>Notes per Page</SettingName>
                  <SettingHelp>many notes will be displayed per page?</SettingHelp>
                  <Field>5</Field>
                </Setting>
                <Setting $alt>
                  <SettingName>Minimum characters</SettingName>
                  <SettingHelp>Enter the minimum number of characters to publish the note.</SettingHelp>
                  <Field>10</Field>
                </Setting>
              </Panel>
              <Submit><SaveButton>Save Settings</SaveButton></Submit>
            </Content>
          </Columns>
        </Page>
        <ScrollBar>
          <svg width="7" height="4" viewBox="0 0 7 4"><path d="M0 4l3.500-4L7 4z" fill="#444" /></svg>
          <Thumb>
            <svg width="7" height="8" viewBox="0 0 7 8"><path d="M0 .5h7M0 3.500h7M0 6.500h7" stroke="#555" strokeWidth="1.300" /></svg>
          </Thumb>
          <Caret c="#555" w={7} />
        </ScrollBar>
      </Viewport>

      <StatusBar>
        <Glass>
          <Smudge $x={318} $y={5} $w={12} $h={8} $c="#8795b0" />
          <Smudge $x={337} $y={6} $w={24} $h={5} $c="#919cb1" />
          <Smudge $x={369} $y={6} $w={52} $h={5} $c="#919cb1" />
          <Smudge $x={475} $y={4} $w={12} $h={9} $c="#7b90b2" />
          <Smudge $x={848} $y={5} $w={27} $h={7} $c="#8792a8" />
          <Smudge $x={883} $y={5} $w={15} $h={7} $c="#b3bac9" />
        </Glass>
        <StatusGroup $w={176}>
          <Text $ml={6}><PanelIcon /></Text>
          <StatusSep />
          <Text $ml={12}><SyncIcon /></Text>
          <Text $ml={1}><Caret w={7} /></Text>
          <Text $ml={12}><UniteIcon /></Text>
          <Text $ml={1}><Caret w={7} /></Text>
          <Turbo>
            <GaugeIcon />
            <Text $ml={5}>A</Text>
            <Text $ml={10}><Caret /></Text>
          </Turbo>
        </StatusGroup>
        <StatusGroup $w={100} $right>
          <Text $ml={8}><ZoomIcon /></Text>
          <Text $ml={2} $ls={-0.4}>Ver (100%)</Text>
          <Text $ml={4}><Caret /></Text>
        </StatusGroup>
      </StatusBar>

      <TaskBar>
        <Glass>
          <Beam $x={603} $w={7} $r={-38} $c="#bcaccc" />
          <Beam $x={840} $w={10} $r={62} $c="#a280a466" />
          <Beam $x={880} $w={8} $r={5} $c="#8c5a8666" />
          <Beam $x={900} $w={8} $r={3} $c="#8c5a8644" />
        </Glass>
        <TaskButton $plain $w={38} $ml={8}><StartOrb /></TaskButton>
        <TaskButton $w={58} $ml={14}><MessengerIcon /></TaskButton>
        <TaskButton $plain $w={66}><IeIcon /></TaskButton>
        <TaskButton $w={58}><FirefoxIcon /></TaskButton>
        <TaskButton $w={53} $ml={4} $stack><FolderIcon /></TaskButton>
        <TaskButton $w={59} $ml={8}><NotepadIcon /></TaskButton>
        <TaskButton $w={53} $ml={4} $stack $tone="linear-gradient(155deg, #ffffffdd, #ffffff99 50%, #ffffff66)"><OperaIcon s={30} h={31} /></TaskButton>
        <TaskButton $w={58} $ml={9} $tone="linear-gradient(155deg, #ffffff66, #ffffff22 45%, #ffffff0c)"><PaintIcon /></TaskButton>
        <Tray>
          <Language $ls={-0.1}>ES</Language>
          <TrayIcons>
            <XamppIcon /><DisplayIcon /><AdobeIcon /><UpdateIcon /><SpeakerIcon /><FlagIcon /><SignalIcon /><BatteryIcon />
          </TrayIcons>
          <Clock>
            <Text $ls={-0.5}>17:24</Text>
            <Text $ls={-0.5}>05/06/2011</Text>
          </Clock>
          <ShowDesktop />
        </Tray>
      </TaskBar>
    </Screen>
  );
}
